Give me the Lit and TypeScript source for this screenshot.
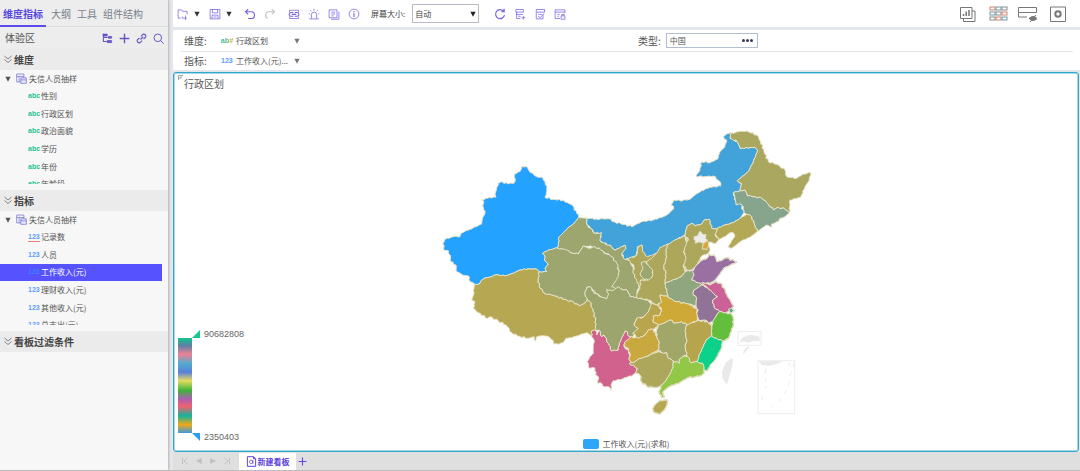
import { LitElement, html, svg, css, nothing } from "lit";
import { customElement, property } from "lit/decorators.js";

type Shape = [fill: string, points: string];

/* Provinces, grouped by the origin their outlines are measured from. */
const WEST: Shape[] = [
  ["#9da66f", "446,292 468,294 472,315 482,325 495,340 515,338 510,362 545,380 555,390 585,375 588,385 575,402 585,418 600,422 610,450 614,465 630,475 635,490 622,510 620,533 600,530 592,512 580,510 566,500 555,515 530,537 510,530 490,515 520,490 545,500 567,452 545,410 495,380 460,378 445,402 420,398 382,384 385,370 386,352 400,338 415,322 430,312"],
  ["#23a2ff", "275,140 291,140 296,150 312,165 325,172 338,172 345,185 351,200 349,218 345,232 370,238 400,241 420,252 432,263 440,280 446,292 430,312 415,322 400,338 386,352 385,370 382,384 355,390 338,400 345,408 343,420 355,432 345,445 350,455 328,455 320,448 295,446 270,450 250,460 225,468 200,464 185,470 165,474 155,480 148,492 133,492 120,485 118,470 95,463 80,455 78,435 62,425 60,405 55,392 40,388 42,375 38,372 45,358 70,350 90,350 95,338 120,328 155,312 158,292 165,280 160,262 160,242 155,240 180,232 198,232 195,222 205,190 215,185 222,190 252,190 256,178 253,162 270,155"],
  ["#b6a852", "133,492 148,492 155,480 165,474 185,470 200,464 225,468 250,460 270,450 295,446 320,448 328,455 325,480 330,505 345,520 370,526 410,540 430,545 448,558 465,548 472,540 480,545 490,575 497,600 497,632 488,632 485,648 470,638 455,642 440,648 425,653 408,655 400,668 385,673 370,672 368,660 350,648 330,648 318,652 316,664 312,650 295,655 262,648 245,638 228,615 205,603 180,590 172,595 140,575 130,565 135,545 125,540 130,525 132,505"],
  ["#9da66f", "382,384 410,390 420,398 445,402 460,378 480,385 495,380 512,390 530,402 545,410 560,430 567,452 565,470 552,490 545,500 558,508 548,522 530,537 510,530 490,510 480,500 470,502 465,520 472,540 465,548 448,558 430,545 410,540 370,526 345,520 330,505 325,480 328,455 350,455 345,445 355,432 343,420 345,408 338,400 355,390"],
  ["#9ca56e", "472,540 465,520 470,502 480,500 490,515 510,530 530,537 536,522 530,508 548,512 566,500 580,510 592,512 600,530 620,533 655,540 665,555 655,575 640,592 620,595 612,615 625,625 615,640 608,652 597,650 592,635 585,633 580,645 568,670 565,690 545,693 535,670 522,645 515,650 508,630 497,632 497,600 490,575 480,545"],
  ["#d1628d", "485,632 497,632 500,645 508,630 515,650 522,645 535,670 545,693 565,690 568,670 580,645 585,633 592,635 597,650 608,652 600,665 585,668 582,680 595,690 600,705 598,720 605,732 622,742 620,755 605,768 590,772 575,778 550,782 545,790 543,810 535,800 520,800 515,790 503,790 505,770 497,765 495,745 475,742 472,725 480,710 490,700 490,680 492,660 485,650"],
];

const NORTH: Shape[] = [
  ["#41a3da", "-132,294 -100,297 -65,296 -45,306 5,320 35,305 70,300 100,290 115,282 132,265 123,255 132,240 150,242 180,238 195,225 215,212 240,202 272,198 270,185 250,168 225,170 198,168 210,150 215,125 240,128 262,118 270,95 285,80 290,60 280,50 290,42 303,38 300,52 322,65 330,85 375,82 383,92 370,125 355,155 322,182 335,190 330,212 310,218 318,250 332,252 342,278 330,295 310,308 285,315 262,325 245,325 238,298 225,298 215,312 195,318 185,310 170,320 165,345 135,360 125,370 100,378 80,400 65,415 45,410 38,395 35,375 22,380 20,405 0,415 -15,418 -25,402 -12,385 -15,375 -45,390 -55,380 -90,362 -85,338 -105,340 -118,325 -128,315"],
  ["#aaa761", "300,42 325,35 350,33 380,45 392,65 402,95 415,125 440,133 465,150 470,170 500,175 520,162 542,158 538,180 525,200 512,232 480,240 478,278 465,268 445,262 430,270 410,248 395,235 375,230 352,228 345,210 330,212 335,190 322,182 355,155 370,125 383,92 375,82 330,85 322,65 300,55"],
  ["#87a58c", "310,218 330,212 345,210 352,228 375,230 395,235 410,248 430,270 445,262 465,268 478,278 465,290 450,295 445,305 425,312 425,322 410,315 395,325 382,335 372,310 365,290 350,283 342,278 340,260 332,252 318,255 315,235"],
  ["#b2a855", "262,325 285,315 310,308 330,295 350,283 365,290 372,310 382,335 360,352 335,362 305,385 295,382 305,362 315,348 310,338 300,338 285,350 268,358 255,345"],
  ["#ada75b", "165,345 170,320 185,310 195,318 215,312 225,298 238,298 245,325 262,325 255,345 268,356 258,370 238,366 234,376 240,388 235,400 215,408 200,435 185,450 168,448 158,425 165,400 160,380 175,360"],
  ["#ececee", "193,350 203,348 210,334 218,344 228,344 226,356 232,360 218,370 205,366 196,370"],
  ["#d6a637", "220,372 232,362 236,378 230,390 218,388"],
];

const SOUTH: Shape[] = [
  ["#ada75b", "20,85 45,80 50,75 55,50 65,45 68,65 83,80 110,70 100,95 98,130 85,150 62,150 60,175 40,130 42,110 30,95"],
  ["#ada75b", "50,203 52,190 60,175 62,150 85,150 98,130 90,112 78,95 95,85 110,70 120,52 145,42 138,60 140,80 132,110 138,130 135,160 140,185 148,205 140,198 120,195 125,215 110,225 85,210"],
  ["#9da66f", "64,98 76,95 90,112 98,120 96,142 85,150 72,148 60,132 68,118"],
  ["#ada75b", "145,42 165,30 195,18 200,40 190,65 198,85 190,110 195,125 185,140 165,148 135,160 138,130 132,110 140,80 138,60"],
  ["#ada75b", "195,18 208,50 200,90 198,120 215,122 225,110 240,95 230,70 220,50"],
  ["#8fa67e", "135,160 165,148 185,140 195,125 218,120 222,135 215,150 235,158 245,165 235,172 222,180 220,195 230,205 228,228 205,222 170,215 148,205 140,185"],
  ["#9a6fa1", "215,150 222,135 218,125 225,110 245,92 262,85 268,73 285,80 290,95 305,92 318,84 350,96 330,105 310,115 300,130 285,150 270,160 250,158 245,165 235,158"],
  ["#ca6197", "245,158 255,160 270,165 288,155 300,160 315,180 322,200 332,215 340,228 330,240 318,248 298,245 282,232 278,210 292,200 275,185 262,172"],
  ["#927398", "222,180 235,172 245,165 262,172 275,185 292,200 278,210 282,232 298,245 290,255 278,275 265,280 255,270 238,272 230,250 235,240 228,228 230,205 220,195"],
  ["#cfa937", "120,195 140,198 148,205 170,215 205,222 228,235 232,255 232,272 215,278 200,285 185,275 165,280 150,270 135,278 115,285 98,275 100,258 120,255 125,240 115,225 125,215"],
  ["#b9a54d", "95,220 110,225 125,240 120,255 100,258 98,275 115,285 110,290 100,298 85,300 75,315 55,325 38,310 55,295 42,285 50,265 70,262 85,245"],
  ["#c9a840", "12,345 15,335 35,320 55,325 75,315 85,300 100,298 110,320 118,340 115,360 95,370 80,380 60,385 40,398 28,390 30,370 25,355"],
  ["#a1a669", "115,285 135,278 150,270 165,280 185,275 200,285 195,305 200,330 196,350 200,375 190,378 178,388 178,400 158,392 145,385 140,368 125,368 115,360 118,340 110,320 110,300"],
  ["#b7a54e", "200,285 215,278 238,272 262,275 275,290 275,305 275,318 258,330 250,350 240,370 232,395 212,398 200,375 196,350 200,330 195,305"],
  ["#62be3b", "278,275 290,255 298,245 318,248 335,255 340,270 338,290 330,310 325,325 308,333 290,325 275,318 275,300"],
  ["#3faa8a", "325,238 335,235 341,243 330,250"],
  ["#0bd18a", "275,318 290,325 308,333 305,350 298,365 285,390 270,405 262,422 252,420 248,400 232,395 240,370 250,350 258,330"],
  ["#ada75b", "28,400 40,398 60,385 80,380 95,372 115,365 125,368 140,368 145,385 158,392 160,410 150,432 135,455 125,465 110,472 95,470 80,468 65,455 60,435 48,430 52,415"],
  ["#93c747", "158,392 178,400 178,388 192,378 208,385 212,398 232,395 248,400 252,410 252,428 245,435 225,440 205,442 190,450 175,460 155,465 140,475 128,485 133,500 125,503 118,490 122,470 135,455 150,432 160,410"],
  ["#b6a852", "105,525 120,512 142,510 140,525 132,540 118,552 105,548 99,535"],
];

/* Breaks every border into short jagged steps. The displacement depends only on
   the two end points, so that neighbours keep a common border. */
function jagged(points: string): string {
  const p = points.split(" ").map((s) => s.split(",").map(Number));
  const out: string[] = [];
  p.forEach((a, i) => {
    const b = p[(i + 1) % p.length];
    out.push(a.join(","));
    const n = Math.floor(Math.hypot(a[0] - b[0], a[1] - b[1]) / 6);
    const flip = a[0] < b[0] || (a[0] === b[0] && a[1] < b[1]);
    for (let k = 1; k < n; k++) {
      const t = k / n;
      const x = a[0] + (b[0] - a[0]) * t;
      const y = a[1] + (b[1] - a[1]) * t;
      const step = flip ? k : n - k;
      const h = Math.sin((a[0] + b[0]) * 12.9 + (a[1] + b[1]) * 7.3 + step * 3.7);
      out.push(`${(x + h * 2).toFixed(1)},${(y - h * 2).toFixed(1)}`);
    }
  });
  return out.join(" ");
}

const provinces = (list: Shape[], move: string) => svg`
  <g transform=${move}>
    ${list.map(([fill, pts]) => svg`<polygon points=${jagged(pts)} fill=${fill}></polygon>`)}
  </g>`;

const chinaMap = html`
  <svg class="map" viewBox="-12 0 1200 918" role="img" aria-label="中国">
    <g stroke="#dcd9b4" stroke-width="5" stroke-linejoin="round">
      ${provinces(SOUTH, "translate(570 330)")}
    </g>
    <g stroke="#e6e3c9" stroke-width="3" stroke-linejoin="round">
      ${provinces(WEST, "translate(0 0)")}
      ${provinces(NORTH, "translate(600 0)")}
      ${provinces(SOUTH.filter((_, i) => i !== 4), "translate(570 330)")}
    </g>
    <g transform="translate(570 330)" fill="#e9e9e9">
      <path d="M334,385 L340,388 336,410 328,440 320,465 308,445 306,425 316,400Z"></path>
      <path d="M358,338 L368,322 392,314 418,320 420,334 400,332 385,338 370,334Z"></path>
      <path d="M368,375 L372,360 384,348 388,352 376,366Z"></path>
      <path d="M416,394 L490,392 470,402 445,408 425,404Z"></path>
      <g fill="none" stroke="#ededed" stroke-width="3">
        <rect x="354" y="305" width="69" height="41"></rect>
        <rect x="414" y="392" width="110" height="159"></rect>
        <path d="M506,398 l6,12 M520,398 v14 M515,425 l-6,14 M508,452 l-2,14 M498,480 l-4,12 M484,506 l-8,10 M462,526 l-8,6 M438,415 l-4,16 M436,445 l2,10 M440,468 l-4,8 M424,500 l4,10"></path>
      </g>
    </g>
  </svg>`;

const icons = {
  folder: svg`<path d="M5 13.500H1.500V2.500h4.500l1.500 2h6v4M7 13.500h6M11.500 10v6M7 11.500v2" />`,
  save: svg`<path d="M1.500 2h13v12.500h-13zM4.500 2v4.500h7V2M4 14.500V9.500h8v5M6 12h4" />`,
  undo: svg`<path stroke-width="1.500" d="M5.500 1.500L2 5l3.500 3.500M2 5H9.500a4.500 4.500 0 0 1 0 9H5.500" />`,
  redo: svg`<path stroke-width="1.500" d="M10.500 1.500L14 5l-3.500 3.500M14 5H6.500a4.500 4.500 0 0 0-1.500 8.700" />`,
  link: svg`<path d="M2 5.500V3h12v2.500M2 11.500V14h12v-2.500" /><path stroke-width="1.400" d="M7 6H4a2.500 2.500 0 0 0 0 5H7M9 6h3a2.500 2.500 0 0 1 0 5H9M5 8.500h6" />`,
  alarm: svg`<path d="M4.500 14V9a3.500 3.500 0 0 1 7 0V14M1.500 14.500h13M8 1v2.500M3 3l1.500 1.500M13 3l-1.500 1.500M1 8h1.500M13.500 8h1.500" />`,
  list: svg`<path d="M1.500 2.500h10.500v10.500H1.500zM14.500 5v10H4M4.500 5.500h5M4.500 8h5M4.500 10.500h3" />`,
  info: svg`<circle cx="8" cy="8" r="6.500" /><path stroke-width="1.500" d="M8 7v5M8 4v1.500" />`,
  refresh: svg`<path stroke-width="1.600" d="M12.500 4A6 6 0 1 0 14 9.500M13.500 1v4H9.500" />`,
  dbAdd: svg`<path d="M2.500 2h10v3.500h-10zM3 8.500h9M3.500 5.500v8.500h5M5.500 11h3.500M12.500 10.500v5M10 13h5" />`,
  dbEdit: svg`<path d="M3 5V2h11v3.500H3v9h9V9M5.500 8.500h5M5.500 11l3 2 5-6" />`,
  dbLock: svg`<path d="M8 14H1.500V2.500h13v4.500M1.500 5.500h13M4.500 8.500h3M4.500 11h2M9.500 10.500h5v4.500h-5zM10.500 10.500V8.500h3v2" />`,
  plus: svg`<path stroke-width="2" d="M8 1v14M1 8h14" />`,
  search: svg`<circle cx="7" cy="7" r="5.500" stroke-width="1.400" /><path stroke-width="1.400" d="M11 11l4.500 4.500" />`,
  chain: svg`<path stroke-width="1.700" d="M6.500 9.500l4-4M7 5l3-3a3 3 0 0 1 4 4L11 9M9 11l-3 3a3 3 0 0 1-4-4L5 7" />`,
  tree: svg`<path stroke-width="1.500" d="M2 1v11.500h5M2 6.500h6" /><path d="M1.500 1.500h6v3h-6zM9 5h5v2.500H9zM7.500 11h6.500v3H7.500z" fill="currentColor" />`,
  chevrons: svg`<path stroke-width="1.400" d="M1 1l7 6 7-6M1 8l7 6 7-6" />`,
  table: svg`<path d="M1 1.500h10.500v11.500H1zM1 5h10.500M4.500 5v8" /><path d="M7 7h8v8H7z" fill="#e9e8ff" /><path d="M7 10h8" />`,
  charts: svg`<path d="M.5 1.500h11.500v11H.5zM12 5h3v10.500H3.500v-3" /><path stroke-width="1.500" d="M3.500 10V8M6.200 10V5.500M9 10V4" />`,
  hide: svg`<path d="M-1.500 1.500h18v5h-18zM-1.500 6.500v4.500h8.500" /><path fill="currentColor" d="M9 12.500q4-4 8 0q-4 4-8 0z" /><path d="M10 16l6-7" />`,
  gear: svg`<path d="M.5 1h15v14.500H.5z" /><circle cx="8" cy="8" r="2.700" stroke-width="2" />`,
  first: svg`<path stroke-width="2" d="M3 2v12M13 2L6 8l7 6" />`,
  last: svg`<path stroke-width="2" d="M13 2v12M3 2l7 6-7 6" />`,
  prev: svg`<path fill="currentColor" d="M13 3v10L3 8z" />`,
  next: svg`<path fill="currentColor" d="M3 3v10l10-5z" />`,
  board: svg`<path stroke-width="1.400" d="M11 1H2v14h12V4L11 1v3h3" /><circle cx="7.500" cy="8.500" r="2.500" /><path d="M10 6v6" />`,
  down: svg`<path fill="currentColor" stroke="none" d="M1 2h14L8 15z" />`,
};

type IconName = keyof typeof icons;
const icon = (name: IconName, cls = "") => html`
  <svg class="icon ${cls}" viewBox="0 0 16 16" aria-hidden="true">${icons[name]}</svg>`;

const gridIcon = html`
  <svg class="icon wide" viewBox="0 0 16 16" aria-hidden="true">
    ${[1, 6, 11].map((y, r) => [0, 6, 12].map((x, c) => svg`
      <rect x=${x} y=${y} width="5" height="3" stroke=${["#d0806c", "#6f9aa8", "#8c8c8c"][(r + c) % 3]}></rect>`))}
  </svg>`;

const shared = css`
  * { box-sizing: border-box; }
  button, input, select { font: inherit; color: inherit; }
  button {
    display: inline-flex; align-items: center; justify-content: center;
    padding: 0; border: 0; background: none; cursor: pointer;
  }
  .icon { width: 12px; height: 12px; fill: none; stroke: currentColor; flex: none; overflow: visible; }
  .small { width: 10px; height: 10px; }
  .tiny { width: 6px; height: 6px; }
  .wide { width: 16px; height: 16px; }
  .badge { flex: none; width: 12px; font: bold 7px/8px "Liberation Sans", sans-serif; text-align: left; }
  .abc { color: #22c296; }
  .num { color: #5b9dff; }
`;

interface Leaf { label: string; selected?: boolean; marked?: boolean }

@customElement("field-tree")
export class FieldTree extends LitElement {
  @property() heading = "";
  @property() kind = "abc";
  @property({ attribute: false }) items: Leaf[] = [];

  static styles = [shared, css`
    :host { display: block; }
    .head {
      display: flex; align-items: center; gap: 2px; height: 21px; margin: 0; padding-left: 4px;
      background: #ebebeb; color: #444; font-size: 10px; font-weight: bold;
    }
    .head .icon { width: 8px; height: 9px; stroke: #555; }
    .clip { height: 114px; overflow: hidden; margin-bottom: 6px; }
    .rows { display: grid; grid-template-rows: repeat(7, 1fr); height: 123px; margin: 0; padding: 0; list-style: none; }
    .row {
      display: flex; align-items: center; gap: 1px; margin-right: 6px; padding-left: 28px;
      font-size: 8px; color: #555; line-height: 12px;
    }
    .root { padding-left: 5px; gap: 2px; }
    .root .tiny { color: #555; margin-right: 3px; }
    .root .tableicon { color: #6a6ad0; width: 11px; height: 11px; }
    .selected { background: #5653fe; color: #fff; }
    .selected .badge { color: #3f7dff; }
    .marked { border-bottom: 1px solid #f08080; }
  `];

  render() {
    return html`
      <h2 class="head">${icon("chevrons")}${this.heading}</h2>
      ${this.items.length ? html`
        <div class="clip"><ul class="rows">
          <li class="row root">${icon("down", "tiny")}${icon("table", "tableicon")}失信人员抽样</li>
          ${this.items.map((i) => html`
            <li class="row ${i.selected ? "selected" : ""}">
              <span class="badge ${this.kind === "abc" ? "abc" : "num"} ${i.marked ? "marked" : ""}">${this.kind}</span>${i.label}
            </li>`)}
        </ul></div>` : nothing}`;
  }
}

@customElement("app-root")
export class AppRoot extends LitElement {
  static styles = [shared, css`
    :host {
      display: grid; grid-template: minmax(0, 1fr) / 168px minmax(0, 1fr); column-gap: 5px;
      height: 100vh; min-height: 460px; border-bottom: 1px solid #bdbdbd; box-sizing: border-box;
      background: #e3e6eb; color: #555; font: 8px/12px "Noto Sans CJK SC", sans-serif;
    }
    .side { background: #f7f7f7; box-shadow: 1px 0 2px #b5b5b5; }
    .tabs { display: flex; height: 27px; background: #ededed; border-bottom: 1px solid #ddd; gap: 4px; }
    .tab { height: 27px; padding: 2px 1px 0; color: #777f8c; font-size: 10px; border-bottom: 2px solid transparent; }
    .tab.on { padding: 2px 3px 0; color: #5548e0; font-weight: bold; border-color: #5a4dea; }
    .area { display: flex; align-items: center; height: 22px; padding: 0 4px 0 5px; gap: 6px; background: #ededed; font-size: 10px; }
    .area .name { flex: 1; }
    .area .icon { color: #6355c8; }
    .small { width: 11px; height: 11px; }

    .main { display: flex; flex-direction: column; min-width: 0; }
    .toolbar { display: flex; align-items: center; height: 27px; padding-right: 12px; background: #fff; color: #7560e0; }
    .tool { width: 20px; height: 24px; }
    .caret { width: 8px; height: 24px; color: #333; }
    .after { margin-right: 4px; }
    .apart { margin-right: 7px; }
    .faded { color: #c4c4c4; }
    .push { margin-right: auto; }
    .view { width: 20px; height: 24px; margin-left: 10px; color: #777; }
    .size { display: flex; align-items: center; gap: 7px; margin: 0 11px 0 7px; color: #444; }
    .pick { display: grid; grid-template-columns: 55px 10px; align-items: center; width: 67px; height: 19px; border: 1px solid #b9bcc4; background: #fff; }
    .pick select {
      grid-area: 1 / 1 / 2 / 3; height: 17px; padding: 0 2px; border: 0; outline: 0;
      appearance: none; background: none; line-height: 12px;
    }
    .pick .icon { grid-area: 1 / 2; justify-self: center; color: #222; pointer-events: none; }

    .fields { margin-top: 3px; padding: 0 7px; background: #fff; }
    .field { display: grid; grid-template-columns: 37px 68px 349px minmax(0, 1fr); align-items: center; height: 21px; padding-left: 4px; }
    .field + .field { height: 19px; border-top: 1px solid #e4e6e8; }
    .field .key { font-size: 10px; }
    .chosen { display: flex; align-items: center; justify-content: start; gap: 3px; white-space: nowrap; line-height: 12px; }
    .drop { justify-self: start; margin-left: 4px; color: #777; width: 8px; height: 12px; }
    .mix { background: linear-gradient(90deg, #30b890 50%, #e8a030 70%, #6fc040); color: transparent; background-clip: text; }
    .kind { display: flex; align-items: center; gap: 5px; font-size: 10px; }
    .combo { display: flex; width: 92px; height: 15px; border: 1px solid #b3bed0; background: #fff; font-size: 8px; }
    .combo input { flex: 1; min-width: 0; padding: 0 3px; border: 0; outline: 0; background: none; }
    .combo button { width: 18px; gap: 1px; }
    .dot { width: 3px; height: 3px; border-radius: 50%; background: #3a3550; }

    .panel {
      flex: 1; min-height: 0; margin: 2px 1px 0 0; display: grid; grid-template: 22px 1fr 15px / minmax(0, 1fr);
      border: 1px solid #38a5cb; border-radius: 3px; background: #fff; box-shadow: inset 0 0 0 1px #a0d8ec;
    }
    .title { display: flex; margin: 0; padding: 0 4px; gap: 1px; font-size: 10px; font-weight: normal; line-height: 22px; }
    .corner { width: 5px; height: 5px; margin-top: 2px; fill: none; stroke: #888; }
    .map { grid-area: 2 / 1; justify-self: center; width: 400px; max-width: 100%; height: auto; margin-top: 25px; }
    .scale { grid-area: 2 / 1 / 4 / 2; align-self: end; justify-self: start; display: grid; grid-template-columns: 14px 8px auto; margin: 0 0 10px 4px; }
    .bar {
      grid-area: 2 / 1; height: 95px;
      background: linear-gradient(#12c58c, #5b80a8 8%, #ee8295 17%, #4fabd0 27%, #5b80d8 36%, #e6dc60 45%, #3eb43a 55%, #a95fae 64%, #f0606f 72%, #14b49c 82%, #efa818 91%, #3d9be0);
    }
    .mark { width: 8px; height: 8px; }
    .top { grid-area: 1 / 2; }
    .bottom { grid-area: 3 / 2; }
    .value { grid-area: 1 / 3; margin-left: 4px; height: 8px; line-height: 9px; font-family: "Liberation Sans", sans-serif; font-size: 9px; color: #666; }
    .low { grid-row: 3; }
    .legend { grid-area: 3 / 1; display: flex; align-items: center; justify-content: center; gap: 4px; }
    .swatch { width: 16px; height: 10px; border-radius: 2px; background: #2ea6f8; }

    .pages { display: flex; align-items: stretch; height: 18px; padding-left: 5px; background: #dfdfdf; }
    .nav { width: 14px; color: #bfbfc3; }
    .nav .icon { width: 8px; height: 8px; }
    .page { width: 57px; margin: 1px 0 0 5px; gap: 1px; background: #fff; color: #5a40d8; font-weight: bold; white-space: nowrap; }
    .add { width: 13px; color: #6048e0; }
    .add .icon { width: 9px; height: 9px; }
  `];

  private tool(name: IconName, label: string, cls = "") {
    return html`<button class="tool ${cls}" aria-label=${label}>${icon(name)}</button>`;
  }

  render() {
    return html`
      <aside class="side">
        <nav class="tabs">
          <button class="tab on">维度指标</button>
          <button class="tab">大纲</button>
          <button class="tab">工具</button>
          <button class="tab">组件结构</button>
        </nav>
        <div class="area">
          <span class="name">体验区</span>
          <button aria-label="层次">${icon("tree", "small")}</button>
          <button aria-label="新建">${icon("plus", "small")}</button>
          <button aria-label="关联">${icon("chain", "small")}</button>
          <button aria-label="搜索">${icon("search", "small")}</button>
        </div>
        <field-tree heading="维度" kind="abc" .items=${[
          { label: "性别" }, { label: "行政区划" }, { label: "政治面貌" }, { label: "学历" }, { label: "年份" }, { label: "年龄段" },
        ]}></field-tree>
        <field-tree heading="指标" kind="123" .items=${[
          { label: "记录数", marked: true }, { label: "人员" }, { label: "工作收入(元)", selected: true },
          { label: "理财收入(元)" }, { label: "其他收入(元)" }, { label: "总支出(元)" },
        ]}></field-tree>
        <field-tree heading="看板过滤条件"></field-tree>
      </aside>

      <main class="main">
        <div class="toolbar">
          ${this.tool("folder", "新建")}
          <button class="caret after" aria-label="新建选项">${icon("down", "tiny")}</button>
          ${this.tool("save", "保存")}
          <button class="caret apart" aria-label="保存选项">${icon("down", "tiny")}</button>
          ${this.tool("undo", "撤销")}
          ${this.tool("redo", "重做", "faded after")}
          ${this.tool("link", "链接")}
          ${this.tool("alarm", "预警")}
          ${this.tool("list", "列表")}
          ${this.tool("info", "信息")}
          <div class="size">
            <label for="size">屏幕大小:</label>
            <span class="pick">
              <select id="size"><option>自动</option></select>
              ${icon("down", "tiny")}
            </span>
          </div>
          ${this.tool("refresh", "刷新")}
          ${this.tool("dbAdd", "添加数据")}
          ${this.tool("dbEdit", "编辑数据")}
          ${this.tool("dbLock", "数据权限", "push")}
          <button class="view" aria-label="图表">${icon("charts", "wide")}</button>
          <button class="view" aria-label="网格">${gridIcon}</button>
          <button class="view" aria-label="隐藏">${icon("hide", "wide")}</button>
          <button class="view" aria-label="设置">${icon("gear", "wide")}</button>
        </div>

        <section class="fields">
          <div class="field">
            <span class="key">维度:</span>
            <button class="chosen"><span class="badge mix">ab#</span>行政区划</button>
            <button class="drop" aria-label="维度选项">${icon("down", "tiny")}</button>
            <div class="kind">
              <label for="kind">类型:</label>
              <span class="combo">
                <input id="kind" value="中国" />
                <button aria-label="选择类型"><i class="dot"></i><i class="dot"></i><i class="dot"></i></button>
              </span>
            </div>
          </div>
          <div class="field">
            <span class="key">指标:</span>
            <button class="chosen"><span class="badge num">123</span>工作收入(元)...</button>
            <button class="drop" aria-label="指标选项">${icon("down", "tiny")}</button>
          </div>
        </section>

        <section class="panel">
          <h1 class="title">
            <svg class="corner" viewBox="0 0 6 6" aria-hidden="true"><path d="M.5 6V.5H6M2.500 5V2.500H5" /></svg>
            行政区划
          </h1>
          ${chinaMap}
          <div class="scale">
            <div class="bar"></div>
            <svg class="mark top" viewBox="0 0 8 8" aria-hidden="true"><path d="M8 0v8H0z" fill="#14c98a" /></svg>
            <span class="value">90682808</span>
            <svg class="mark bottom" viewBox="0 0 8 8" aria-hidden="true"><path d="M0 0h8v8z" fill="#2a9df5" /></svg>
            <span class="value low">2350403</span>
          </div>
          <div class="legend"><i class="swatch"></i>工作收入(元)(求和)</div>
        </section>

        <footer class="pages">
          <button class="nav" aria-label="首页">${icon("first")}</button>
          <button class="nav" aria-label="上一页">${icon("prev")}</button>
          <button class="nav" aria-label="下一页">${icon("next")}</button>
          <button class="nav" aria-label="末页">${icon("last")}</button>
          <button class="page">${icon("board", "small")}新建看板</button>
          <button class="add" aria-label="添加看板">${icon("plus")}</button>
        </footer>
      </main>`;
  }
}
